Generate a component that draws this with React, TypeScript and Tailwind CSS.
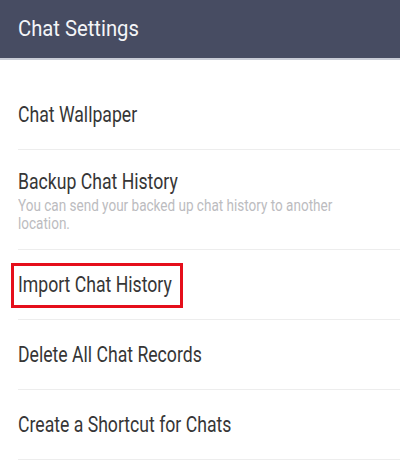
import React from "react";

const font = { fontFamily: "Roboto, 'Noto Sans', sans-serif" };

function Label({ children, className = "" }: { children: React.ReactNode; className?: string }) {
  return (
    <span className={`inline-block origin-left scale-x-[0.82] whitespace-nowrap ${className}`}>{children}</span>
  );
}

function Row({ title, boxed = false }: { title: string; boxed?: boolean }) {
  return (
    <div className="relative ml-[18px] flex h-[70px] items-center border-b border-[#ededed]">
      <Label className="text-[21.5px] leading-[24px] text-[#363636]">{title}</Label>
      {boxed && (
        <div className="absolute left-[-7px] top-[13px] h-[45px] w-[172px] border-[3px] border-[#e50f1b]" />
      )}
    </div>
  );
}

export default function App() {
  return (
    <div className="h-[467px] w-[400px] overflow-hidden bg-white" style={font}>
      <div className="flex h-[60px] items-center border-b-2 border-[#c9ccd6] bg-[#474c62] pl-[18px]">
        <span className="inline-block origin-left scale-x-[0.92] whitespace-nowrap text-[22px] leading-[26px] text-[#f4f5f8]">
          Chat Settings
        </span>
      </div>
      <div className="pt-[20px]">
        <Row title="Chat Wallpaper" />
        <div className="ml-[18px] flex h-[100px] flex-col justify-center border-b border-[#ededed] pt-[3px]">
          <Label className="text-[21.5px] leading-[24px] text-[#363636]">Backup Chat History</Label>
          <div className="mt-[3px] w-[400px] origin-left scale-x-[0.82] text-[16.5px] leading-[18px] text-[#bcbcc0]">
            <div className="w-[405px]">You can send your backed up chat history to another location.</div>
          </div>
        </div>
        <Row title="Import Chat History" boxed />
        <Row title="Delete All Chat Records" />
        <Row title="Create a Shortcut for Chats" />
      </div>
    </div>
  );
}
